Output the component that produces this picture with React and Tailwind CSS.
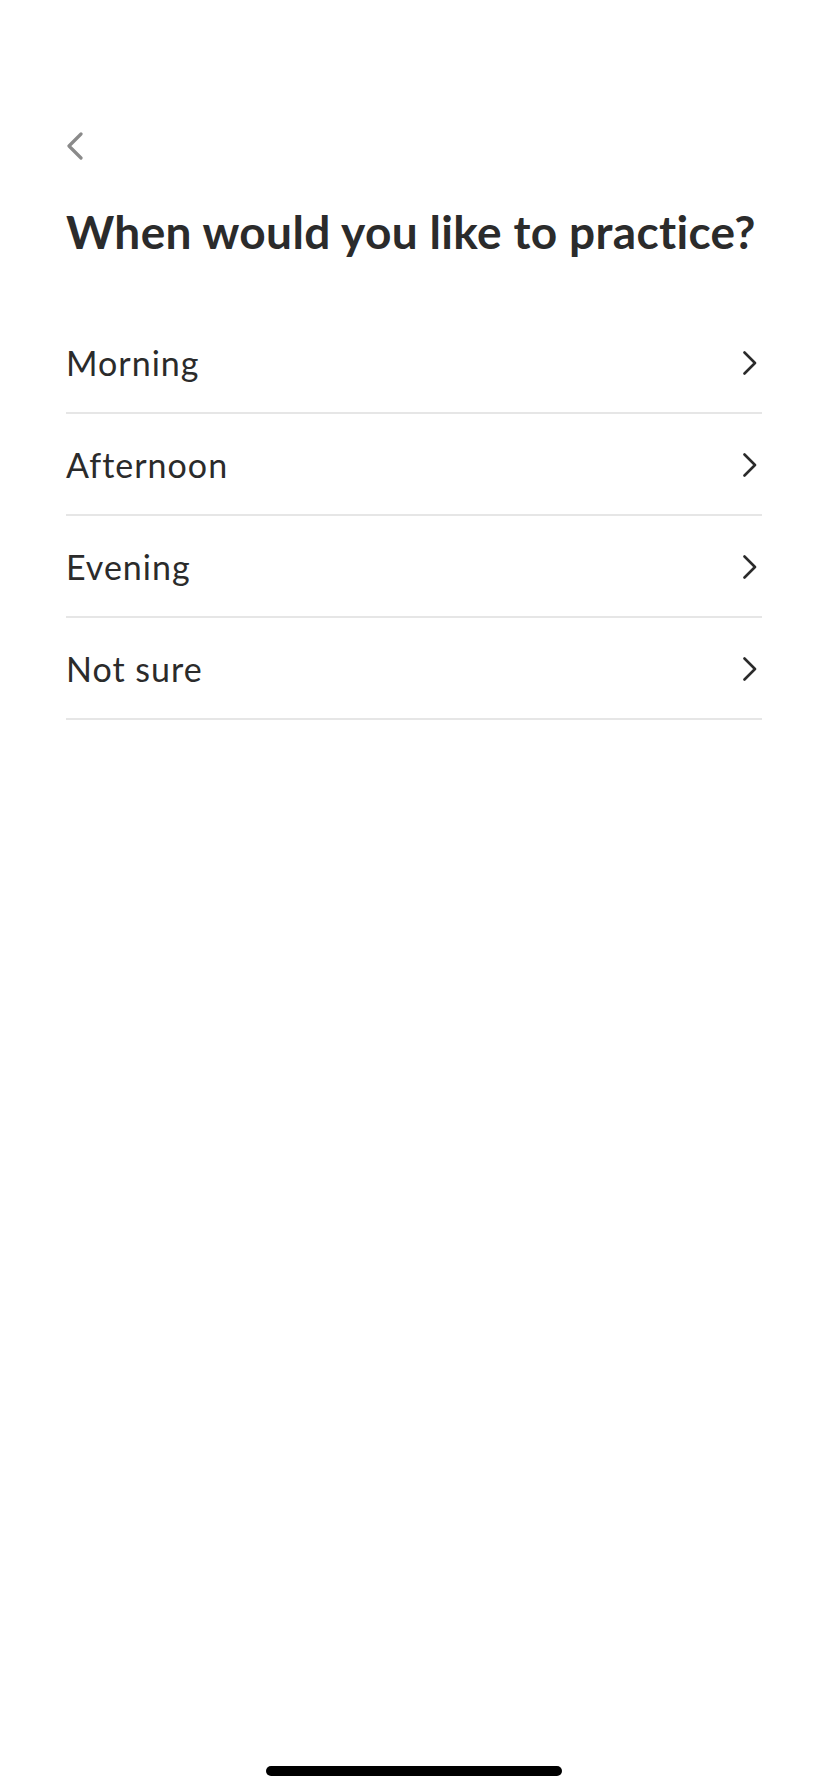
import React from "react";

const items = ["Morning", "Afternoon", "Evening", "Not sure"];

function ChevronRight() {
  return (
    <svg width="16" height="24" viewBox="0 0 16 24" fill="none">
      <path d="M2.5 1.5 L13 12 L2.5 22.5" stroke="#2b2b2b" strokeWidth="2.6" strokeLinecap="round" strokeLinejoin="round" />
    </svg>
  );
}

export default function App() {
  return (
    <div className="w-[828px] h-[1792px] bg-white flex flex-col" style={{ fontFamily: "Lato, 'Noto Sans', sans-serif" }}>
      <div className="px-[66px] pt-[132px] flex flex-col">
        <div className="h-[27px] w-[18px]">
          <svg width="18" height="28" viewBox="0 0 18 28" fill="none">
            <path d="M15 2 L3 14 L15 26" stroke="#8a8a8a" strokeWidth="3.2" strokeLinecap="round" strokeLinejoin="round" />
          </svg>
        </div>
        <h1 className="mt-[45px] text-[46px] leading-[56px] font-bold text-[#2b2b2b] tracking-[0.35px] whitespace-nowrap">
          When would you like to practice?
        </h1>
        <div className="mt-[52px] flex flex-col">
          {items.map((t) => (
            <div key={t} className="h-[102px] flex items-center justify-between border-b-2 border-[#e6e6e6] pt-[2px]">
              <span className="text-[34px] text-[#2b2b2b] leading-none tracking-[1px]">{t}</span>
              <div className="mr-[4px]">
                <ChevronRight />
              </div>
            </div>
          ))}
        </div>
      </div>
      <div className="mt-auto pb-[16px] flex justify-center">
        <div className="w-[296px] h-[10px] rounded-full bg-black" />
      </div>
    </div>
  );
}
